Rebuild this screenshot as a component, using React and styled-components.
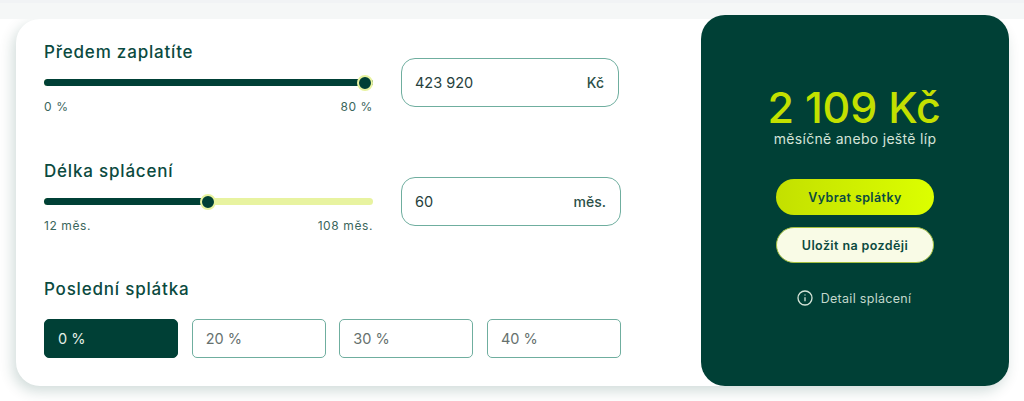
import React from 'react'
import styled, {createGlobalStyle} from 'styled-components'

const Global = createGlobalStyle`
    html, body {
        margin: 0;
        height: 100%;
        overflow: hidden;
        background: #fff;
    }
    * {
        box-sizing: border-box;
    }
`

const Page = styled.div`
    width: 1024px;
    height: 401px;
    overflow: hidden;
    font-family: 'Inter', 'Liberation Sans', sans-serif;
    color: #004036;
`

const TopBand = styled.div`
    position: relative;
    z-index: 1;
    height: 19px;
    background: #f5f7f7;
    border-top: 3px solid #f1f3f5;
`

const Card = styled.div`
    width: 993px;
    height: 367px;
    margin-left: 16px;
    display: flex;
    background: #fff;
    border-radius: 24px;
    box-shadow: -3px 5px 14px rgba(0, 64, 54, 0.19);
`

const Form = styled.div`
    width: 685px;
    padding: 23px 0 0 28px;
`

const Field = styled.div`
    height: 119px;
`

const Title = styled.div`
    font-size: 17px;
    font-weight: 500;
    line-height: 20px;
    letter-spacing: 0.8px;
    color: #0b4a40;
`

const SliderRow = styled.div`
    display: flex;
    gap: 28px;
`

const SliderCol = styled.div`
    width: 329px;
    padding-top: 17px;
`

const Track = styled.div`
    position: relative;
    height: 7px;
    border-radius: 4px;
    background: #e8f3a0;
`

const Fill = styled.div`
    height: 100%;
    border-radius: 4px;
    background: #004036;
`

const Thumb = styled.div`
    position: absolute;
    top: 50%;
    width: 16px;
    height: 16px;
    border-radius: 50%;
    background: #004036;
    border: 2px solid #e8f3a0;
    transform: translate(-50%, -50%);
`

const Limits = styled.div`
    display: flex;
    justify-content: space-between;
    margin-top: 13px;
    font-size: 12px;
    line-height: 16px;
    letter-spacing: 0.6px;
    color: #3a665c;
`

const InputBox = styled.div`
    width: ${props => props.width}px;
    height: 49px;
    margin-top: -4px;
    padding: 0 14px 0 13px;
    display: flex;
    align-items: center;
    justify-content: space-between;
    border: 1px solid #6fae9f;
    border-radius: 14px;
    font-size: 14.5px;
    font-weight: 400;
    color: #26413c;
`

const Unit = styled.span`
    font-weight: 500;
    font-size: 14px;
    color: #2c5048;
`

const Options = styled.div`
    width: 577px;
    display: grid;
    grid-template-columns: repeat(4, 1fr);
    gap: 13.5px;
    margin-top: 20px;
`

const LastTitle = styled(Title)`
    margin-top: -1px;
`

const Option = styled.div`
    height: 39px;
    padding-left: 13px;
    display: flex;
    align-items: center;
    border: 1px solid ${props => (props.$active ? '#004036' : '#6fae9f')};
    border-radius: 5px;
    background: ${props => (props.$active ? '#004036' : '#fff')};
    color: ${props => (props.$active ? '#e4efe6' : '#66716e')};
    font-size: 14.5px;
`

const Panel = styled.div`
    position: relative;
    z-index: 2;
    width: 308px;
    height: 371px;
    margin-top: -4px;
    padding-top: 70px;
    display: flex;
    flex-direction: column;
    align-items: center;
    background: #004036;
    border-radius: 24px;
`

const Price = styled.div`
    margin-right: 2px;
    font-size: 43px;
    line-height: 44px;
    font-weight: 500;
    letter-spacing: -0.2px;
    white-space: nowrap;
    color: #c3e000;
`

const Note = styled.div`
    margin-top: 1px;
    font-size: 14px;
    line-height: 18px;
    letter-spacing: 0.3px;
    color: #d5e4d8;
`

const Button = styled.div`
    width: 158px;
    height: 36px;
    display: flex;
    align-items: center;
    justify-content: center;
    border-radius: 18px;
    font-size: 12.5px;
    font-weight: 600;
    letter-spacing: 0.4px;
    color: #0b4a40;
`

const PrimaryButton = styled(Button)`
    margin-top: 31px;
    background: linear-gradient(90deg, #c3e000, #dcff00);
`

const SecondaryButton = styled(Button)`
    margin-top: 12px;
    background: #f9fbe6;
    border: 1px solid #a5bf3f;
`

const DetailLink = styled.div`
    margin-top: 27px;
    margin-right: 2px;
    display: flex;
    align-items: center;
    gap: 8px;
    font-size: 12.5px;
    letter-spacing: 0.3px;
    color: #c3d8cc;
`

const InfoIcon = () => (
    <svg width='16' height='16' viewBox='0 0 16 16' fill='none' stroke='#d5e4d8' strokeWidth='1.3'>
        <circle cx='8' cy='8' r='7' />
        <path d='M8 7.2v4' />
        <path d='M8 4.4v1.1' />
    </svg>
)

const App = () => {
    return (
        <Page>
            <Global />
            <TopBand />
            <Card>
                <Form>
                    <Field>
                        <Title>Předem zaplatíte</Title>
                        <SliderRow>
                            <SliderCol>
                                <Track>
                                    <Fill style={{width: '100%'}} />
                                    <Thumb style={{left: '321px'}} />
                                </Track>
                                <Limits>
                                    <span>0 %</span>
                                    <span>80 %</span>
                                </Limits>
                            </SliderCol>
                            <InputBox width={218}>
                                423 920
                                <Unit>Kč</Unit>
                            </InputBox>
                        </SliderRow>
                    </Field>
                    <Field>
                        <Title>Délka splácení</Title>
                        <SliderRow>
                            <SliderCol>
                                <Track>
                                    <Fill style={{width: '49.7%'}} />
                                    <Thumb style={{left: '49.7%'}} />
                                </Track>
                                <Limits>
                                    <span>12 měs.</span>
                                    <span>108 měs.</span>
                                </Limits>
                            </SliderCol>
                            <InputBox width={220}>
                                60
                                <Unit>měs.</Unit>
                            </InputBox>
                        </SliderRow>
                    </Field>
                    <LastTitle>Poslední splátka</LastTitle>
                    <Options>
                        <Option $active>0 %</Option>
                        <Option>20 %</Option>
                        <Option>30 %</Option>
                        <Option>40 %</Option>
                    </Options>
                </Form>
                <Panel>
                    <Price>2 109 Kč</Price>
                    <Note>měsíčně anebo ještě líp</Note>
                    <PrimaryButton>Vybrat splátky</PrimaryButton>
                    <SecondaryButton>Uložit na později</SecondaryButton>
                    <DetailLink>
                        <InfoIcon />
                        Detail splácení
                    </DetailLink>
                </Panel>
            </Card>
        </Page>
    )
}

export default App
